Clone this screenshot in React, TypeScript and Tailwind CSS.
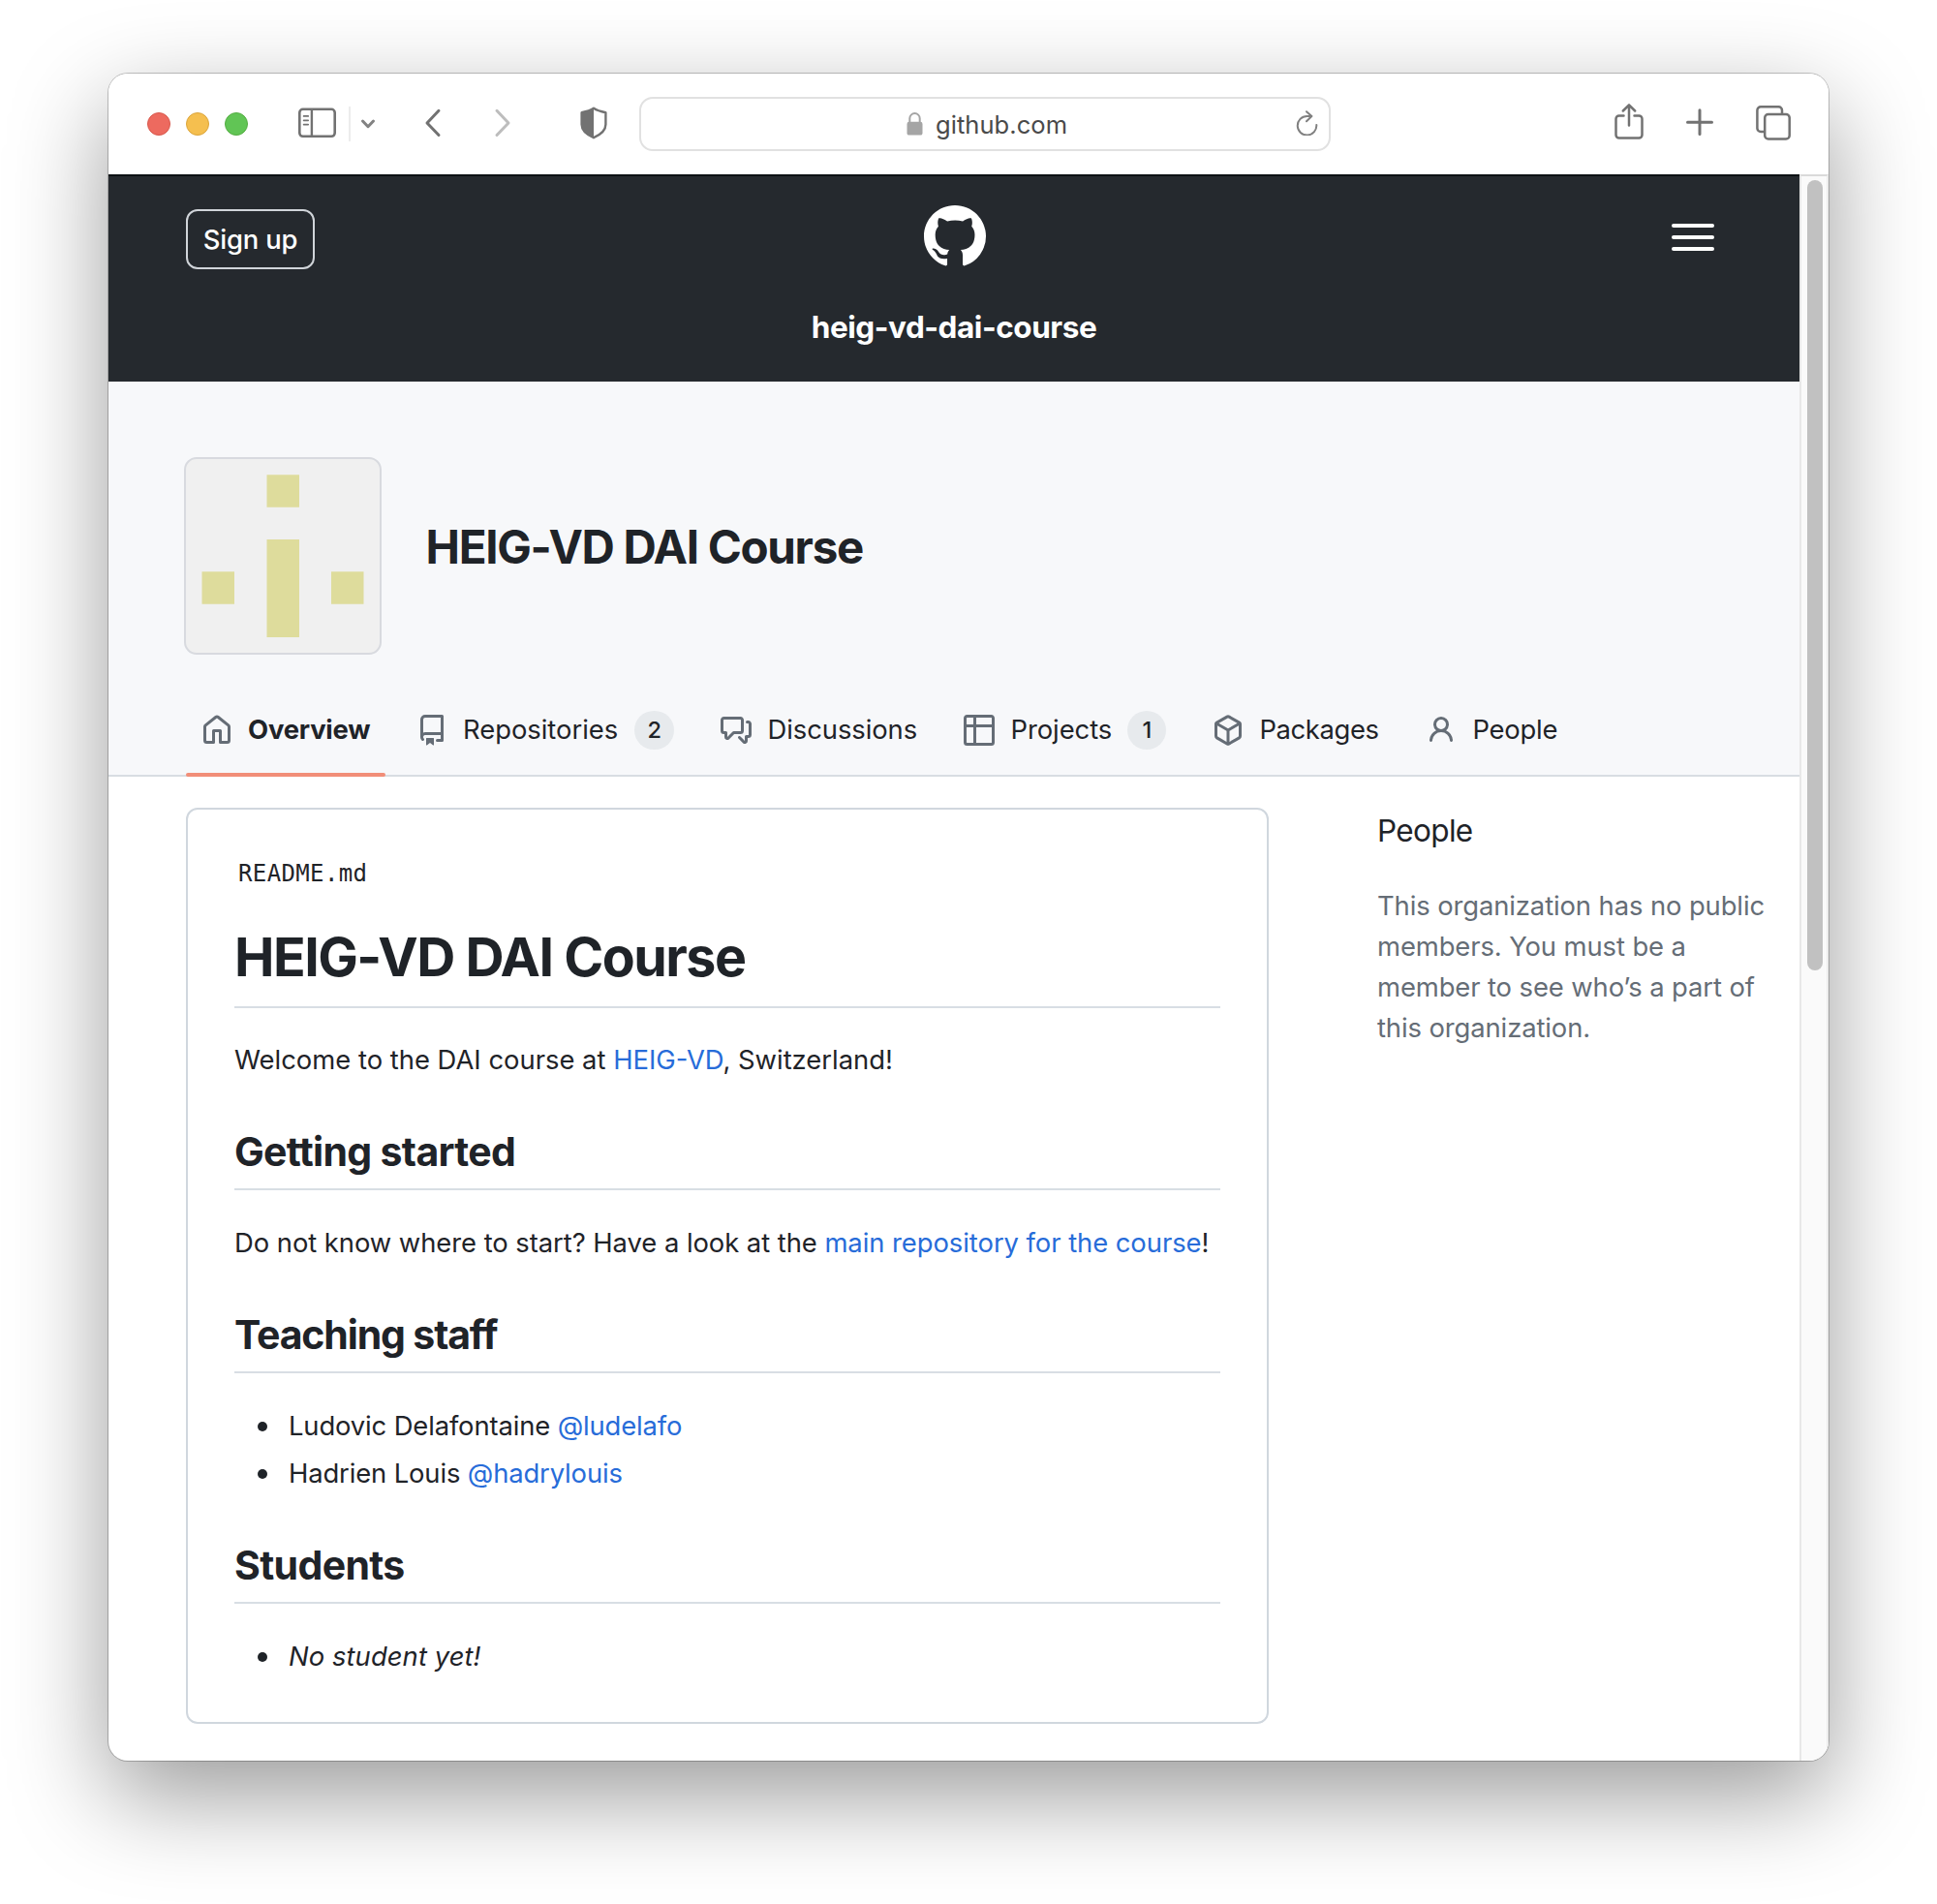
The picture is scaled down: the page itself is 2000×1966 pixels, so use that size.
import type { ReactNode } from "react";

const icons = {
  home: "M6.906.664a1.749 1.749 0 0 1 2.187 0l5.25 4.2c.415.332.657.835.657 1.367v7.019A1.75 1.75 0 0 1 13.25 15h-3.5a.75.75 0 0 1-.75-.75V9H7v5.25a.75.75 0 0 1-.75.75h-3.5A1.75 1.75 0 0 1 1 13.25V6.23c0-.531.242-1.034.657-1.366l5.25-4.2Zm1.25 1.171a.25.25 0 0 0-.312 0l-5.25 4.2a.25.25 0 0 0-.094.196v7.019c0 .138.112.25.25.25H5.5V8.25a.75.75 0 0 1 .75-.75h3.5a.75.75 0 0 1 .75.75v5.25h2.75a.25.25 0 0 0 .25-.25V6.23a.25.25 0 0 0-.094-.195Z",
  repo: "M2 2.5A2.5 2.5 0 0 1 4.5 0h8.75a.75.75 0 0 1 .75.75v12.5a.75.75 0 0 1-.75.75h-2.5a.75.75 0 0 1 0-1.5h1.75v-2h-8a1 1 0 0 0-.714 1.7.75.75 0 1 1-1.072 1.05A2.495 2.495 0 0 1 2 11.5Zm10.5-1h-8a1 1 0 0 0-1 1v6.708A2.486 2.486 0 0 1 4.5 9h8ZM5 12.25a.25.25 0 0 1 .25-.25h3.5a.25.25 0 0 1 .25.25v3.25a.25.25 0 0 1-.4.2l-1.45-1.087a.249.249 0 0 0-.3 0L5.4 15.7a.25.25 0 0 1-.4-.2Z",
  discussions:
    "M1.75 1h8.5c.966 0 1.75.784 1.75 1.75v5.5A1.75 1.75 0 0 1 10.25 10H7.061l-2.574 2.573A1.458 1.458 0 0 1 2 11.543V10h-.25A1.75 1.75 0 0 1 0 8.25v-5.5C0 1.784.784 1 1.75 1ZM1.5 2.75v5.5c0 .138.112.25.25.25h1a.75.75 0 0 1 .75.75v2.19l2.72-2.72a.749.749 0 0 1 .53-.22h3.5a.25.25 0 0 0 .25-.25v-5.5a.25.25 0 0 0-.25-.25h-8.5a.25.25 0 0 0-.25.25Zm13 2a.25.25 0 0 0-.25-.25h-.5a.75.75 0 0 1 0-1.5h.5c.966 0 1.75.784 1.75 1.75v5.5A1.75 1.75 0 0 1 14.25 12H14v1.543a1.458 1.458 0 0 1-2.487 1.03L9.22 12.28a.749.749 0 0 1 .326-1.275.749.749 0 0 1 .734.215l2.22 2.22v-2.19a.75.75 0 0 1 .75-.75h1a.25.25 0 0 0 .25-.25Z",
  table:
    "M0 1.75C0 .784.784 0 1.75 0h12.5C15.216 0 16 .784 16 1.75v12.5A1.75 1.75 0 0 1 14.25 16H1.75A1.75 1.75 0 0 1 0 14.25ZM6.5 6.5v8h7.75a.25.25 0 0 0 .25-.25V6.5Zm8-1.5V1.75a.25.25 0 0 0-.25-.25H6.5V5Zm-13 1.5v7.75c0 .138.112.25.25.25H5v-8ZM5 5V1.5H1.75a.25.25 0 0 0-.25.25V5Z",
  box: "m8.878.392 5.25 3.045c.54.314.872.89.872 1.514v6.098a1.75 1.75 0 0 1-.872 1.514l-5.25 3.045a1.75 1.75 0 0 1-1.756 0l-5.25-3.045A1.75 1.75 0 0 1 1 11.049V4.951c0-.624.332-1.201.872-1.514L7.122.392a1.75 1.75 0 0 1 1.756 0ZM7.875 1.69l-4.63 2.685L8 7.133l4.755-2.758-4.63-2.685a.248.248 0 0 0-.25 0ZM2.5 5.677v5.372c0 .09.047.171.125.216l4.625 2.683V8.432Zm6.25 8.271 4.625-2.683a.25.25 0 0 0 .125-.216V5.677L8.75 8.432Z",
  person:
    "M10.561 8.073a6.005 6.005 0 0 1 3.432 5.142.75.75 0 1 1-1.498.07 4.5 4.5 0 0 0-8.99 0 .75.75 0 0 1-1.498-.07 6.004 6.004 0 0 1 3.431-5.142 3.999 3.999 0 1 1 5.123 0ZM10.5 5a2.5 2.5 0 1 0-5 0 2.5 2.5 0 0 0 5 0Z",
  github:
    "M8 0C3.58 0 0 3.58 0 8c0 3.54 2.29 6.53 5.47 7.59.4.07.55-.17.55-.38 0-.19-.01-.82-.01-1.49-2.01.37-2.53-.49-2.69-.94-.09-.23-.48-.94-.82-1.13-.28-.15-.68-.52-.01-.53.63-.01 1.08.58 1.23.82.72 1.21 1.87.87 2.33.66.07-.52.28-.87.51-1.07-1.78-.2-3.64-.89-3.64-3.95 0-.87.31-1.59.82-2.15-.08-.2-.36-1.02.08-2.12 0 0 .67-.21 2.2.82.64-.18 1.32-.27 2-.27.68 0 1.36.09 2 .27 1.53-1.04 2.2-.82 2.2-.82.44 1.1.16 1.92.08 2.12.51.56.82 1.27.82 2.15 0 3.07-1.87 3.75-3.65 3.95.29.25.54.73.54 1.48 0 1.07-.01 1.93-.01 2.2 0 .21.15.46.55.38A8.013 8.013 0 0 0 16 8c0-4.42-3.58-8-8-8z",
};

function Octicon({ name, className }: { name: keyof typeof icons; className: string }) {
  return (
    <svg viewBox="0 0 16 16" className={`shrink-0 ${className}`} fill="currentColor" fillRule="evenodd">
      <path d={icons[name]} />
    </svg>
  );
}

function Toolbar() {
  return (
    <div className="flex h-[104px] items-start bg-white text-[#727272]">
      <div className="mt-10 ml-10 flex gap-4">
        <span className="size-6 rounded-full border border-[#d8584c] bg-[#ed6a5f]" />
        <span className="size-6 rounded-full border border-[#dba53b] bg-[#f5bf4f]" />
        <span className="size-6 rounded-full border border-[#54ad42] bg-[#61c555]" />
      </div>

      <svg className="mt-[35px] ml-[52px] h-8 w-[39px]" viewBox="0 0 39 32" fill="none" stroke="currentColor">
        <rect x="1.3" y="1.8" width="36.4" height="28" rx="3.5" strokeWidth="2.6" />
        <path d="M13.9 1.5v28.5" strokeWidth="2.4" />
        <path d="M5.6 8.9h4.6M5.6 13.3h4.6M5.6 17.6h4.600" strokeWidth="1.7" strokeLinecap="round" />
      </svg>
      <span className="mt-[34px] ml-[13px] h-9 w-[2px] bg-[#ececec]" />
      <svg className="mt-[46px] ml-[10px] h-3 w-4" viewBox="0 0 16 12" fill="none" stroke="#828282" strokeWidth="3" strokeLinecap="round" strokeLinejoin="round">
        <path d="M2.500 3 8 8.700l5.500-5.700" />
      </svg>

      <svg className="mt-9 ml-[49px] h-[30px] w-5" viewBox="0 0 20 30" fill="none" stroke="currentColor" strokeWidth="3" strokeLinecap="round" strokeLinejoin="round">
        <path d="M16 2.300 4 15l12 12.500" />
      </svg>
      <svg className="mt-9 ml-[52px] h-[30px] w-5" viewBox="0 0 20 30" fill="none" stroke="#bdbdbd" strokeWidth="3" strokeLinecap="round" strokeLinejoin="round">
        <path d="M4 2.300 16 15 4 27.500" />
      </svg>

      <svg className="mt-[34px] ml-[70px] h-[34px] w-7" viewBox="0 0 28 34" fill="none" stroke="currentColor" strokeWidth="2.400" strokeLinejoin="round">
        <path d="M14 1.800c3.400 2.300 7.200 3.400 12.400 4.400v12.400c0 6.300-4.500 10.200-12.400 13.600C6.100 28.800 1.600 24.900 1.600 18.600V6.200C6.800 5.200 10.600 4.100 14 1.800Z" />
        <path d="M14 1.800v30.400C6.100 28.800 1.600 24.900 1.600 18.600V6.200C6.800 5.200 10.600 4.100 14 1.800Z" fill="currentColor" stroke="none" />
      </svg>

      <div className="mt-6 ml-[33px] flex h-14 w-[714px] items-center rounded-[14px] border-2 border-[#e1e1e1] bg-white">
        <div className="ml-[274px] flex w-[166px] items-center gap-[13px]">
          <svg className="h-6 w-[17px] shrink-0" viewBox="0 0 17 24">
            <rect x="0.500" y="9.800" width="16" height="13.800" rx="2.200" fill="#a5a5a5" />
            <path d="M3.300 10.500V6.300a5.200 5.200 0 0 1 10.400 0v4.200" fill="none" stroke="#a5a5a5" strokeWidth="2" />
          </svg>
          <span className="pt-[2px] text-[25.500px] leading-8 font-[430] tracking-[0.060px] text-[#4a4a4a]">github.com</span>
        </div>
        <svg className="ml-[236px] h-[26px] w-[23px] -translate-y-px" viewBox="0 0 23 26" fill="none" stroke="#808080" strokeWidth="2" strokeLinecap="round" strokeLinejoin="round">
          <path d="M21.300 14.900A9.800 9.800 0 1 1 11.500 5.900h4.500" />
          <path d="m11 1.200 5.400 4.900L11 11.200" />
        </svg>
      </div>

      <svg className="mt-[30px] ml-[293px] h-[38px] w-[30px]" viewBox="0 0 30 38" fill="none" stroke="currentColor" strokeWidth="2.500" strokeLinecap="round" strokeLinejoin="round">
        <path d="M9.500 13.500H4.700a3.200 3.200 0 0 0-3.200 3.200v16.600a3.200 3.200 0 0 0 3.200 3.200h20.600a3.200 3.200 0 0 0 3.200-3.200V16.700a3.200 3.200 0 0 0-3.200-3.200H20.500" />
        <path d="M15 23.500V2.500M8.800 8.500 15 2.300l6.200 6.200" />
      </svg>
      <svg className="mt-[36px] ml-11 h-7 w-7" viewBox="0 0 28 28" fill="none" stroke="currentColor" strokeWidth="3" strokeLinecap="round">
        <path d="M14 1.800v24.700M1.500 14.200h25" />
      </svg>
      <svg className="mt-[33px] ml-11 h-9 w-9" viewBox="0 0 36 36" fill="none" stroke="currentColor" strokeWidth="2.500" strokeLinejoin="round">
        <path d="M9 27H5a3.600 3.600 0 0 1-3.600-3.600V4.900A3.600 3.600 0 0 1 5 1.300h18.400A3.600 3.600 0 0 1 27 4.900V9" />
        <rect x="9.200" y="9" width="25.500" height="25.500" rx="3.600" />
      </svg>
    </div>
  );
}

function SiteHeader() {
  return (
    <header className="h-[214px] border-t-2 border-[#0d1114] bg-[#25292e] px-20 pt-[30px] text-white">
      <div className="grid h-[66px] grid-cols-[1fr_64px_1fr]">
        <button className="mt-1 h-[62px] w-[133px] rounded-xl border-2 border-[#d0d4d9] pt-[2px] text-center text-[27.400px] font-[450] tracking-[-0.150px]">Sign up</button>
        <Octicon name="github" className="ml-px size-16" />
        <div className="mt-[19px] mr-2 flex w-11 flex-col gap-2 justify-self-end">
          <span className="h-1 rounded-full bg-white" />
          <span className="h-1 rounded-full bg-white" />
          <span className="h-1 rounded-full bg-white" />
        </div>
      </div>
      <p className="mt-9 text-center text-[31.500px] leading-[48px] font-[650] tracking-[-0.450px]">heig-vd-dai-course</p>
    </header>
  );
}

function Avatar() {
  return (
    <svg className="size-[204px] rounded-[13px] border-2 border-[#d8dadf] bg-[#f0f0f0]" viewBox="0 0 200 200" fill="#dedc9c">
      <path d="M83.500 16.200h33.500v33.500H83.500zM83.500 83h33.500v101H83.500zM16.500 116.200H50v33.500H16.500zM150 116.200h33.500v33.500H150z" />
    </svg>
  );
}

function Tab({ icon, width, count, active, children }: { icon: keyof typeof icons; width: string; count?: number; active?: boolean; children: ReactNode }) {
  return (
    <a className={`relative flex h-24 items-center px-4 ${active ? "font-[650]" : ""}`}>
      <Octicon name={icon} className="mr-4 size-8 text-[#656d76]" />
      <span className={`whitespace-nowrap ${width}`}>{children}</span>
      {count !== undefined && (
        <span className="ml-4 flex h-10 min-w-10 items-center justify-center rounded-full bg-[#e7eaed] px-[13.500px] text-[23.500px] font-medium">{count}</span>
      )}
      {active && <span className="absolute inset-x-0 bottom-0 h-1 rounded-full bg-[#f18e78]" />}
    </a>
  );
}

function OrgHead() {
  return (
    <section className="flex h-[408px] flex-col border-b-2 border-[#d8dde2] bg-[#f7f8fa] pl-[78px]">
      <div className="mt-[78px] flex items-center">
        <Avatar />
        <h1 className="mb-[18px] ml-[45.500px] text-[47.500px] leading-[60px] font-[650] tracking-[-1.300px]">HEIG-VD DAI Course</h1>
      </div>
      <nav className="mt-[30px] -mb-[2px] ml-[2px] flex gap-4 text-[27.400px] font-[430]">
        <Tab icon="home" width="w-[126px] tracking-[-0.200px]" active>Overview</Tab>
        <Tab icon="repo" width="w-[161px] tracking-[-0.020px]" count={2}>Repositories</Tab>
        <Tab icon="discussions" width="w-[155px] tracking-[-0.060px]">Discussions</Tab>
        <Tab icon="table" width="w-[105px] tracking-[-0.050px]" count={1}>Projects</Tab>
        <Tab icon="box" width="w-[124px] tracking-[-0.380px]">Packages</Tab>
        <Tab icon="person" width="w-[90px] tracking-[-0.250px]">People</Tab>
      </nav>
    </section>
  );
}

function Link({ children }: { children: ReactNode }) {
  return <a className="text-[#276cd9]">{children}</a>;
}

function H2({ className, children }: { className: string; children: ReactNode }) {
  return <h2 className={`mt-12 border-b-2 border-[#d8dee4] pb-3 text-[41px] leading-[52px] font-[650] ${className}`}>{children}</h2>;
}

function Item({ children }: { children: ReactNode }) {
  return (
    <li className="flex">
      <span className="mt-[17px] mr-[22px] ml-6 size-[10px] rounded-full bg-[#1f2328]" />
      <span>{children}</span>
    </li>
  );
}

function Readme() {
  return (
    <article className="h-[946px] w-[1118px] rounded-xl border-2 border-[#d0d7de] px-12 pt-[50px] text-[27.400px] leading-[42px]">
      <p className="ml-1 font-['DejaVu_Sans_Mono',monospace] text-[24px] leading-8 tracking-[0.370px]">README.md</p>
      <h1 className="mt-[35px] border-b-2 border-[#d8dee4] pb-4 text-[55.500px] leading-[70px] font-[650] tracking-[-1.520px]">HEIG-VD DAI Course</h1>
      <p className="mt-8">
        Welcome to the DAI course at <Link>HEIG-VD</Link>, Switzerland!
      </p>
      <H2 className="tracking-[-0.680px]">Getting started</H2>
      <p className="mt-[33px] tracking-[-0.050px] whitespace-nowrap">
        Do not know where to start? Have a look at the <Link>main repository for the course</Link>!
      </p>
      <H2 className="tracking-[-1.150px]">Teaching staff</H2>
      <ul className="mt-[33px] flex flex-col gap-[7px] tracking-[-0.130px]">
        <Item>
          Ludovic Delafontaine <Link>@ludelafo</Link>
        </Item>
        <Item>
          Hadrien Louis <Link>@hadrylouis</Link>
        </Item>
      </ul>
      <H2 className="tracking-[-0.650px]">Students</H2>
      <ul className="mt-[33px]">
        <Item>
          <em className="tracking-[0.080px]">No student yet!</em>
        </Item>
      </ul>
    </article>
  );
}

function PeopleAside() {
  return (
    <aside className="ml-28 w-[412px]">
      <h2 className="text-[31.500px] leading-[48px] tracking-[-0.650px]">People</h2>
      <p className="mt-8 text-[27.400px] leading-[42px] tracking-[-0.100px] text-[#656d76]">
        This organization has no public members. You must be a member to see who’s a part of this organization.
      </p>
    </aside>
  );
}

export default function App() {
  return (
    <div className="h-[1966px] w-[2000px] overflow-hidden bg-white px-28 pt-[76px] font-['Inter',sans-serif] text-[#1f2328]">
      <div className="flex h-[1742px] w-[1776px] flex-col overflow-hidden rounded-[20px] bg-white shadow-[0_0_0_1px_rgba(0,0,0,0.22),0_36px_100px_rgba(0,0,0,0.4)]">
        <Toolbar />
        <div className="flex grow">
          <main className="w-[1746px]">
            <SiteHeader />
            <OrgHead />
            <div className="flex pt-8 pl-20 font-[430]">
              <Readme />
              <PeopleAside />
            </div>
          </main>
          <div className="w-[30px] border-t-2 border-r-2 border-l-2 border-t-[#dadada] border-r-[#ededed] border-l-[#e8e8e8] bg-[#fafafa] pt-1 pl-[6px]">
            <div className="h-[816px] w-4 rounded-full bg-[#c1c1c1]" />
          </div>
        </div>
      </div>
    </div>
  );
}
